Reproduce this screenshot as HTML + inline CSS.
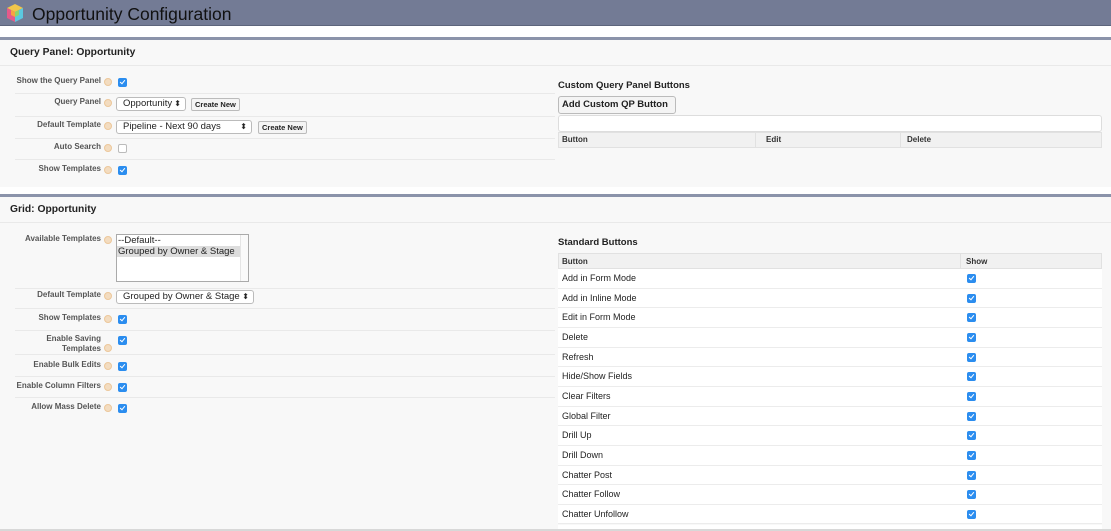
<!DOCTYPE html>
<html><head><meta charset="utf-8"><style>
*{box-sizing:border-box;margin:0;padding:0}
html{width:1111px;height:531px;overflow:hidden}
body{width:1111px;height:531px;overflow:hidden;background:#fff;font-family:"Liberation Sans",Arial,sans-serif;position:relative;color:#333}
.a{position:absolute}
.hdr{left:0;top:0;width:1111px;height:26px;background:#737b95;border-bottom:1px solid #5d657c}
.hdr .t{left:32px;top:4px;font-size:17.5px;color:#111}
.sec{left:0;width:1111px;background:#f8f8f8;border-top:3px solid #8b93aa}
.st{font-size:10.3px;font-weight:bold;color:#222}
.line{height:1px;background:#e9e9e9}
.lbl{font-size:8px;font-weight:bold;color:#555;text-align:right;width:101px;left:0;line-height:10px}
.help{width:8px;height:8px;border-radius:50%;background:#f3dcc0;border:1px solid #ecc79a}
.cb{width:9px;height:9px;border-radius:2px;background:#2b8def}
.cb:after{content:"";position:absolute;left:3px;top:1px;width:2px;height:4px;border:solid #fff;border-width:0 1px 1px 0;transform:rotate(40deg)}
.cbo{width:9px;height:9px;border-radius:2px;background:#fff;border:1px solid #bbb}
.sel{height:14px;border:1px solid #bbb;border-radius:3px;background:#fff;font-size:9.5px;padding-left:6px;line-height:12px;color:#222}
.sel span{position:absolute;right:4px;top:0;font-size:8px}
.btn{height:13px;border:1px solid #bbb;border-radius:2px;background:#f4f4f4;font-size:7.5px;font-weight:bold;line-height:11px;padding:0 3px;color:#222}
.th{background:#f1f1f1;border:1px solid #e1e1e1;font-size:8px;font-weight:bold;color:#333}
.row{left:558px;width:544px;height:19.65px;background:#fff;border-bottom:1px solid #ececec;font-size:9px;color:#222;line-height:18px;padding-left:4px;overflow:hidden}
.row .cb{left:409px;top:5px}
</style></head><body>
<div class="a hdr">
<svg class="a" style="left:5px;top:3px" width="20" height="20" viewBox="0 0 20 20"><polygon points="10,1 18,5 10,9 2,5" fill="#f0c64a"/><polygon points="2,5 10,9 10,19 2,15" fill="#e45a8a"/><polygon points="10,9 18,5 18,15 10,19" fill="#5bc8e0"/><polygon points="6,7 10,9 10,14 6,12" fill="#f7a440"/><polygon points="10,9 14,7 14,12 10,14" fill="#8fd36a"/></svg>
<div class="a t">Opportunity Configuration</div></div>

<div class="a sec" style="top:37px;height:150px"></div>
<div class="a st" style="left:10px;top:47px">Query Panel: Opportunity</div>
<div class="a line" style="left:0;top:65px;width:1111px"></div>
<div class="a line" style="left:15px;top:93px;width:540px"></div>
<div class="a line" style="left:15px;top:116px;width:540px"></div>
<div class="a line" style="left:15px;top:138px;width:540px"></div>
<div class="a line" style="left:15px;top:159px;width:540px"></div>

<div class="a lbl" style="top:76px">Show the Query Panel</div><div class="a help" style="left:104px;top:78px"></div><div class="a cb" style="left:118px;top:78px"></div>
<div class="a lbl" style="top:97px">Query Panel</div><div class="a help" style="left:104px;top:99px"></div>
<div class="a sel" style="left:116px;top:97px;width:70px">Opportunity<span>⬍</span></div><div class="a btn" style="left:191px;top:98px">Create New</div>
<div class="a lbl" style="top:120px">Default Template</div><div class="a help" style="left:104px;top:122px"></div>
<div class="a sel" style="left:116px;top:120px;width:136px">Pipeline - Next 90 days<span>⬍</span></div><div class="a btn" style="left:258px;top:121px">Create New</div>
<div class="a lbl" style="top:142px">Auto Search</div><div class="a help" style="left:104px;top:144px"></div><div class="a cbo" style="left:118px;top:144px"></div>
<div class="a lbl" style="top:164px">Show Templates</div><div class="a help" style="left:104px;top:166px"></div><div class="a cb" style="left:118px;top:166px"></div>

<div class="a st" style="left:558px;top:80px;font-size:9.5px">Custom Query Panel Buttons</div>
<div class="a btn" style="left:558px;top:96px;height:18px;line-height:16px;font-size:9.5px;width:118px;border-radius:3px">Add Custom QP Button</div>
<div class="a" style="left:558px;top:115px;width:544px;height:17px;background:#fff;border:1px solid #ddd;border-radius:3px"></div>
<div class="a th" style="left:558px;top:132px;width:544px;height:16px"></div>
<div class="a" style="left:562px;top:135px;font-size:8px;font-weight:bold">Button</div>
<div class="a" style="left:755px;top:132px;width:1px;height:16px;background:#e1e1e1"></div>
<div class="a" style="left:766px;top:135px;font-size:8px;font-weight:bold">Edit</div>
<div class="a" style="left:900px;top:132px;width:1px;height:16px;background:#e1e1e1"></div>
<div class="a" style="left:907px;top:135px;font-size:8px;font-weight:bold">Delete</div>

<div class="a sec" style="top:194px;height:335px"></div>
<div class="a st" style="left:10px;top:204px">Grid: Opportunity</div>
<div class="a line" style="left:0;top:222px;width:1111px"></div>
<div class="a line" style="left:15px;top:288px;width:540px"></div>
<div class="a line" style="left:15px;top:308px;width:540px"></div>
<div class="a line" style="left:15px;top:330px;width:540px"></div>
<div class="a line" style="left:15px;top:354px;width:540px"></div>
<div class="a line" style="left:15px;top:376px;width:540px"></div>
<div class="a line" style="left:15px;top:397px;width:540px"></div>

<div class="a lbl" style="top:234px">Available Templates</div><div class="a help" style="left:104px;top:236px"></div>
<div class="a" style="left:116px;top:234px;width:133px;height:48px;background:#fff;border:1px solid #aaa;font-size:9.5px;line-height:11px;color:#222">
<div style="padding-left:1px">--Default--</div><div style="background:#ddd;width:124px;padding-left:1px">Grouped by Owner &amp; Stage</div>
<div class="a" style="right:0;top:0;width:8px;height:46px;border-left:1px solid #e5e5e5;background:#fafafa"></div></div>
<div class="a lbl" style="top:290px">Default Template</div><div class="a help" style="left:104px;top:292px"></div>
<div class="a sel" style="left:116px;top:290px;width:138px">Grouped by Owner &amp; Stage<span>⬍</span></div>
<div class="a lbl" style="top:313px">Show Templates</div><div class="a help" style="left:104px;top:315px"></div><div class="a cb" style="left:118px;top:315px"></div>
<div class="a lbl" style="top:334px">Enable Saving<br>Templates</div><div class="a help" style="left:104px;top:344px"></div><div class="a cb" style="left:118px;top:336px"></div>
<div class="a lbl" style="top:360px">Enable Bulk Edits</div><div class="a help" style="left:104px;top:362px"></div><div class="a cb" style="left:118px;top:362px"></div>
<div class="a lbl" style="top:381px">Enable Column Filters</div><div class="a help" style="left:104px;top:383px"></div><div class="a cb" style="left:118px;top:383px"></div>
<div class="a lbl" style="top:402px">Allow Mass Delete</div><div class="a help" style="left:104px;top:404px"></div><div class="a cb" style="left:118px;top:404px"></div>

<div class="a st" style="left:558px;top:237px;font-size:9.5px">Standard Buttons</div>
<div class="a th" style="left:558px;top:253px;width:544px;height:16px"></div>
<div class="a" style="left:562px;top:257px;font-size:8px;font-weight:bold">Button</div>
<div class="a" style="left:960px;top:253px;width:1px;height:16px;background:#e1e1e1"></div>
<div class="a" style="left:966px;top:257px;font-size:8px;font-weight:bold">Show</div>

<div class="a row" style="top:269px"><div class="a cb"></div>Add in Form Mode</div>
<div class="a row" style="top:288.6px"><div class="a cb"></div>Add in Inline Mode</div>
<div class="a row" style="top:308.3px"><div class="a cb"></div>Edit in Form Mode</div>
<div class="a row" style="top:328px"><div class="a cb"></div>Delete</div>
<div class="a row" style="top:347.6px"><div class="a cb"></div>Refresh</div>
<div class="a row" style="top:367.3px"><div class="a cb"></div>Hide/Show Fields</div>
<div class="a row" style="top:386.9px"><div class="a cb"></div>Clear Filters</div>
<div class="a row" style="top:406.6px"><div class="a cb"></div>Global Filter</div>
<div class="a row" style="top:426.2px"><div class="a cb"></div>Drill Up</div>
<div class="a row" style="top:445.9px"><div class="a cb"></div>Drill Down</div>
<div class="a row" style="top:465.5px"><div class="a cb"></div>Chatter Post</div>
<div class="a row" style="top:485.2px"><div class="a cb"></div>Chatter Follow</div>
<div class="a row" style="top:504.8px"><div class="a cb"></div>Chatter Unfollow</div>
<div class="a row" style="top:524.5px;height:4.5px;border:0"><div class="a cb"></div></div>
<div class="a" style="left:0;top:529px;width:1111px;height:2px;background:#d8d8d8"></div>
</body></html>
